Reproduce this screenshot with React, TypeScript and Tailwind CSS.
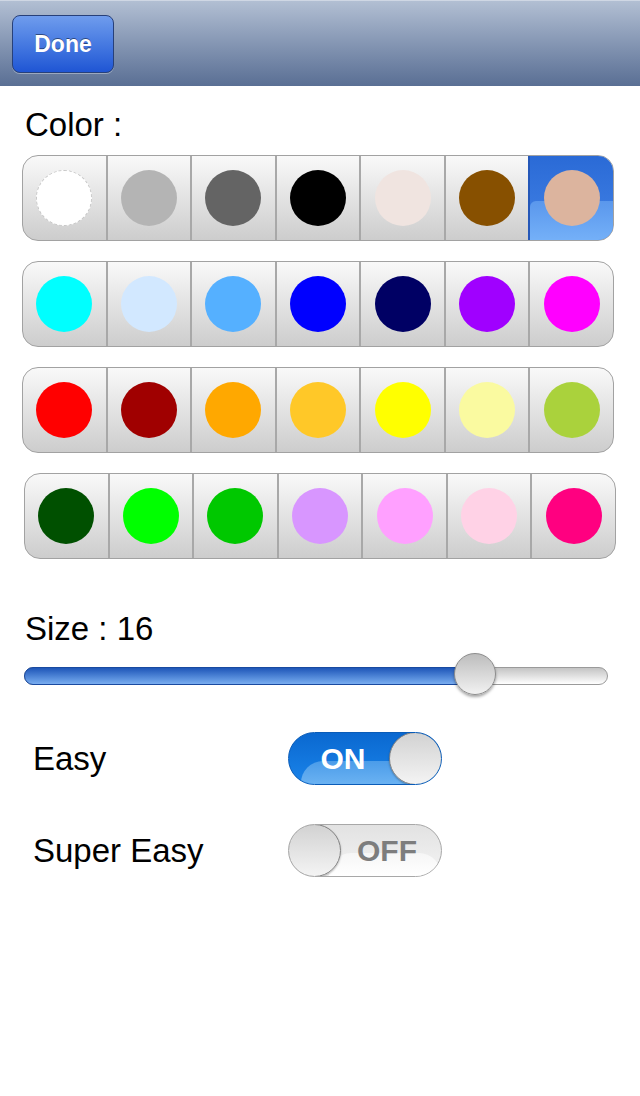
const rows = [
  ["#ffffff", "#b4b4b4", "#646464", "#000000", "#f0e4e0", "#875000", "#dcb49e"],
  ["#00ffff", "#d2e8ff", "#55b0ff", "#0000ff", "#000064", "#a000ff", "#ff00ff"],
  ["#ff0000", "#a00000", "#ffa800", "#ffc828", "#ffff00", "#fafaa0", "#aad23c"],
  ["#005000", "#00ff00", "#00c800", "#d896ff", "#ffa0ff", "#ffd2e6", "#ff0080"],
]

function ColorRow({ colors, rowIndex }: { colors: string[]; rowIndex: number }) {
  return (
    <div
      className={
        "flex h-[86px] w-[592px] overflow-hidden rounded-[16px] border border-[#a2a2a2] bg-gradient-to-b from-[#f9f9f9] to-[#cdcdcd] " +
        (rowIndex === 3 ? "ml-[24px]" : "ml-[22px]")
      }
    >
      {colors.map((c, i) => {
        const selected = rowIndex === 0 && i === 6
        return (
          <div
            key={i}
            className={
              "relative flex flex-1 items-center justify-center " +
              (i > 0 ? "border-l-2 " : "") +
              (selected
                ? "border-[#2457b8] bg-gradient-to-b from-[#2a6ad6] to-[#4383e6]"
                : "border-[#a8a8a8]")
            }
          >
            {selected && (
              <div className="absolute inset-x-0 bottom-0 h-[47%] rounded-tl-[6px] bg-gradient-to-b from-[#5a97ec] to-[#74b0f8]" />
            )}
            <div
              className={
                "relative h-[56px] w-[56px] rounded-full " +
                (c === "#ffffff" ? "border border-dashed border-[#c8c8c8]" : "")
              }
              style={{ backgroundColor: c }}
            />
          </div>
        )
      })}
    </div>
  )
}

function Switch({ on }: { on: boolean }) {
  return (
    <div
      className={
        "relative h-[53px] w-[154px] overflow-hidden rounded-full border " +
        (on
          ? "border-[#0a5cb8] bg-gradient-to-b from-[#0a68d0] to-[#1a84ea]"
          : "border-[#a8a8a8] bg-gradient-to-b from-[#e2e2e2] to-[#f4f4f4]")
      }
    >
      <div
        className={
          "absolute bottom-0 h-[46%] rounded-tl-[22px] " +
          (on
            ? "left-[12px] right-0 bg-gradient-to-b from-[#4b9ce9] to-[#6ab2f2]"
            : "left-[40px] right-0 rounded-tr-[22px] bg-gradient-to-b from-[#f6f6f6] to-[#ffffff]")
        }
      />
      <div
        className={
          "absolute top-0 flex h-full items-center justify-center text-[30px] font-bold " +
          (on ? "left-[12px] w-[84px] text-white" : "right-[12px] w-[84px] text-[#7d7d7d]")
        }
        style={{ fontFamily: '"Liberation Sans", Arial, sans-serif' }}
      >
        {on ? "ON" : "OFF"}
      </div>
      <div
        className={
          "absolute top-[-1px] h-[53px] w-[53px] rounded-full border border-[#808080] bg-gradient-to-b from-[#d2d2d2] to-[#f4f4f4] shadow-[0_1px_2px_rgba(0,0,0,0.3)] " +
          (on ? "right-[-1px]" : "left-[-1px]")
        }
      />
    </div>
  )
}

export default function App() {
  const fillTo = 475 - 24

  return (
    <div
      className="h-[1096px] w-[640px] bg-white text-black"
      style={{ fontFamily: '"Liberation Sans", Arial, sans-serif' }}
    >
      <div className="flex h-[86px] items-start border-t border-[#cfd7e4] bg-gradient-to-b from-[#b2bfd3] to-[#5a6f94] pl-[12px] pt-[14px]">
        <button className="flex h-[58px] w-[102px] items-center justify-center rounded-[8px] border border-[#27407a] bg-gradient-to-b from-[#6f9ced] to-[#1f55d4] text-[23px] font-bold text-white shadow-[0_1px_0_rgba(255,255,255,0.35)] [text-shadow:0_-1px_0_rgba(0,0,0,0.45)]">
          Done
        </button>
      </div>

      <div className="ml-[25px] mt-[23px] text-[33px] leading-[32px]">Color :</div>

      <div className="mt-[14px] flex flex-col gap-[20px]">
        {rows.map((r, i) => (
          <ColorRow key={i} colors={r} rowIndex={i} />
        ))}
      </div>

      <div className="ml-[25px] mt-[54px] text-[33px] leading-[32px]">Size : 16</div>

      <div className="relative ml-[24px] mt-[8px] h-[42px] w-[584px]">
        <div className="absolute left-0 right-0 top-[14px] h-[18px] rounded-full border border-[#9a9a9a] bg-gradient-to-b from-[#c4c4c4] to-[#ffffff]" />
        <div
          className="absolute left-0 top-[14px] h-[18px] rounded-l-full border border-[#1a4aa0] bg-gradient-to-b from-[#1e56b8] to-[#79adf0]"
          style={{ width: fillTo }}
        />
        <div
          className="absolute top-0 h-[42px] w-[42px] rounded-full border border-[#8c8c8c] bg-gradient-to-b from-[#bdbdbd] to-[#f2f2f2] shadow-[0_2px_3px_rgba(0,0,0,0.35)]"
          style={{ left: fillTo - 21 }}
        />
      </div>

      <div className="mt-[37px] flex items-center">
        <div className="w-[288px] pl-[33px] text-[33px] leading-[32px]">Easy</div>
        <Switch on={true} />
      </div>

      <div className="mt-[39px] flex items-center">
        <div className="w-[288px] pl-[33px] text-[33px] leading-[32px]">Super Easy</div>
        <Switch on={false} />
      </div>
    </div>
  )
}
